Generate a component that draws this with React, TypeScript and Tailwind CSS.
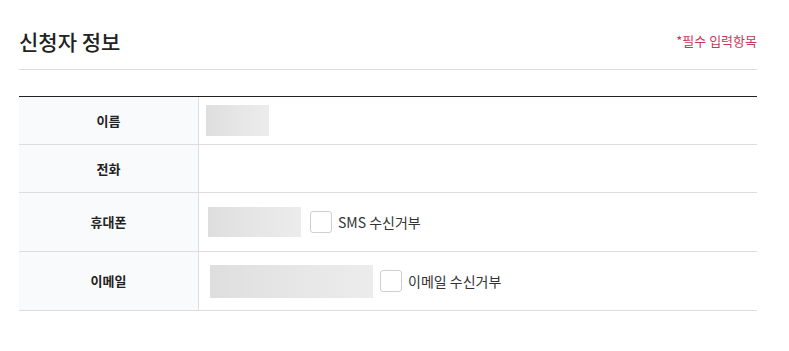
const font = { fontFamily: '"Noto Sans CJK KR", "Noto Sans", sans-serif' };

function Blur({ className }: { className: string }) {
  return <div className={`bg-gradient-to-r from-[#dedede] via-[#e6e6e6] to-[#ececec] ${className}`} />;
}

function Check({ className = '' }: { className?: string }) {
  return <span className={`inline-block h-[22px] w-[22px] rounded-[3px] border border-[#cfcfcf] bg-white ${className}`} />;
}

function Row({ label, tall, children }: { label: string; tall?: boolean; children?: React.ReactNode }) {
  return (
    <div className={`flex border-b border-[#dddddd] ${tall ? 'h-[59px]' : 'h-[48px]'}`}>
      <div className="flex w-[180px] shrink-0 items-center justify-center border-r border-[#dddddd] bg-[#f9fafb] text-[13px] font-bold text-[#222]">
        {label}
      </div>
      <div className="flex flex-1 items-center">{children}</div>
    </div>
  );
}

export default function App() {
  return (
    <div className="h-[351px] w-[789px] bg-white" style={font}>
      <div className="ml-[19px] w-[738px]">
        <div className="flex items-center justify-between border-b border-[#dddddd] pt-[26px] pb-[13px]">
          <h2 className="h-[30px] text-[21px] leading-[30px] font-medium text-[#222]">신청자 정보</h2>
          <span className="text-[13px] text-[#c9385a]">*필수 입력항목</span>
        </div>

        <div className="mt-[26px] border-t border-[#222]">
          <Row label="이름">
            <Blur className="ml-[7px] h-[31px] w-[63px]" />
          </Row>
          <Row label="전화" />
          <Row label="휴대폰" tall>
            <Blur className="ml-[9px] h-[30px] w-[93px]" />
            <Check className="ml-[9px]" />
            <span className="ml-[6px] text-[14px] text-[#333]">SMS 수신거부</span>
          </Row>
          <Row label="이메일" tall>
            <Blur className="ml-[11px] h-[33px] w-[163px]" />
            <Check className="ml-[7px]" />
            <span className="ml-[6px] text-[14px] text-[#333]">이메일 수신거부</span>
          </Row>
        </div>
      </div>
    </div>
  );
}
